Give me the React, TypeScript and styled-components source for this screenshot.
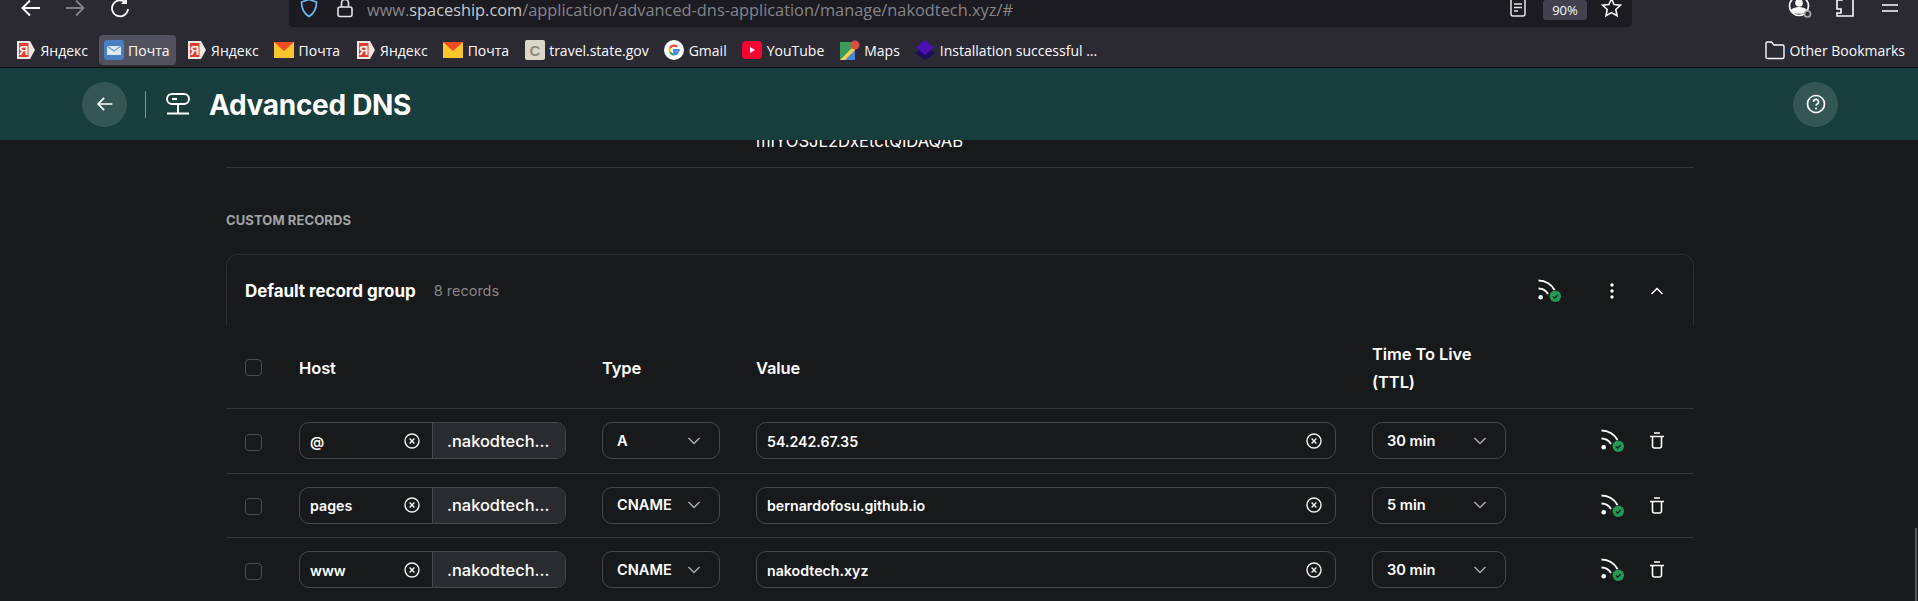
import { ReactNode } from "react";
import styled, { createGlobalStyle } from "styled-components";

const GlobalStyle = createGlobalStyle`
  html, body {
    margin: 0;
    padding: 0;
    background: #18191b;
  }
  * {
    box-sizing: border-box;
  }
`;

const Page = styled.div`
  width: 1918px;
  height: 601px;
  overflow: hidden;
  display: flex;
  flex-direction: column;
  position: relative;
  background: #18191b;
`;

/* browser chrome */

const Toolbar = styled.div`
  height: 27px;
  flex: none;
  background: #2b2a33;
  overflow: hidden;
  color: #fbfbfe;
`;

const ToolbarInner = styled.div`
  height: 39px;
  margin-top: -12px;
  display: flex;
  align-items: center;
  padding-left: 20px;
`;

const NavButton = styled.div<{ $gap: number; $dim?: boolean }>`
  display: flex;
  width: 22px;
  justify-content: center;
  margin-right: ${(p) => p.$gap}px;
  opacity: ${(p) => (p.$dim ? 0.4 : 1)};
`;

const UrlBar = styled.div`
  width: 1343px;
  height: 39px;
  margin-left: 158px;
  padding-left: 11px;
  padding-right: 10px;
  background: #1c1b22;
  border-radius: 4px;
  display: flex;
  align-items: center;
`;

const SecurityIcons = styled.div`
  display: flex;
  align-items: center;
  gap: 19px;
`;

const UrlText = styled.div`
  margin-left: 14px;
  padding-top: 4px;
  font: 400 16.35px "Open Sans", sans-serif;
  color: #85848a;
  white-space: nowrap;
  flex: 1;
  & b {
    font-weight: 400;
    color: #c9c9cc;
  }
`;

const ZoomChip = styled.div`
  width: 44px;
  height: 20px;
  margin: 5px 14px 0 17px;
  border-radius: 3px;
  background: #42414d;
  font: 400 13px "Open Sans", sans-serif;
  line-height: 20px;
  text-align: center;
  color: #fbfbfe;
`;

const RightTools = styled.div`
  margin-left: 145px;
  display: flex;
`;

const ToolSlot = styled.div`
  width: 45px;
  display: flex;
  justify-content: center;
`;

const Bookmarks = styled.div`
  height: 41px;
  flex: none;
  background: #2b2a33;
  border-bottom: 1px solid #0c0c0d;
  display: flex;
  align-items: center;
  padding: 6px 13px 0 16px;
  color: #fbfbfe;
  font: 400 14px "Open Sans", sans-serif;
`;

const Bookmark = styled.div<{ $active?: boolean }>`
  display: flex;
  align-items: center;
  gap: 4.5px;
  height: 30px;
  padding: ${(p) => (p.$active ? "0 6px 0 5px" : "0")};
  margin-right: ${(p) => (p.$active ? "11px" : "15.5px")};
  margin-left: ${(p) => (p.$active ? "-5px" : "0")};
  border-radius: 4px;
  background: ${(p) => (p.$active ? "#52525e" : "transparent")};
  white-space: nowrap;
`;

const OtherBookmarks = styled(Bookmark)`
  margin: 0 0 0 auto;
`;

const Favicon = styled.svg`
  width: 20px;
  height: 20px;
  flex: none;
`;

/* app header */

const AppHeader = styled.header`
  height: 72px;
  flex: none;
  background: #173d3c;
  display: flex;
  align-items: center;
  padding: 0 80px 0 82px;
  color: #fff;
`;

const RoundButton = styled.div`
  width: 45px;
  height: 45px;
  border-radius: 50%;
  background: #345755;
  display: flex;
  align-items: center;
  justify-content: center;
`;

const HeaderDivider = styled.div`
  width: 1px;
  height: 27px;
  margin: 0 20px 0 18px;
  background: #7d9493;
`;

const Title = styled.h1`
  margin: 0 0 0 19px;
  padding-top: 2px;
  flex: 1;
  font: 700 28px "Inter", sans-serif;
  letter-spacing: -0.3px;
`;

/* dns content */

const Main = styled.main`
  flex: 1;
  overflow: hidden;
  padding: 0 224px 0 226px;
`;

const ScrolledContent = styled.div`
  margin-top: -12px;
`;

const DkimRow = styled.div`
  height: 40px;
  padding: 0 0 0 530px;
  border-bottom: 1px solid #333538;
  color: #fff;
  font: 400 16.6px "Inter", sans-serif;
  line-height: 27px;
`;

const SectionLabel = styled.div`
  margin-top: 44px;
  height: 16px;
  color: #a2a3a5;
  font: 700 13px "Inter", sans-serif;
  line-height: 16px;
  letter-spacing: 0.1px;
`;

const GroupHeader = styled.div`
  margin-top: 26px;
  height: 72px;
  border: 1px solid #2b2d30;
  border-bottom: 0;
  border-radius: 12px 12px 0 0;
  display: flex;
  align-items: center;
  padding-left: 18px;
`;

const GroupName = styled.div`
  color: #fff;
  font: 700 17px "Inter", sans-serif;
  letter-spacing: -0.05px;
`;

const GroupCount = styled.div`
  margin-left: 18px;
  flex: 1;
  color: #85868a;
  font: 400 14.5px "Inter", sans-serif;
`;

const GroupActions = styled.div`
  display: flex;
  align-items: center;
  padding-right: 29px;
  color: #fff;
`;

const DotsSlot = styled.div`
  display: flex;
  margin: 0 36px 0 48px;
`;

const recordColumns = "54px 303px 154px 616px 1fr";

const HeadRow = styled.div`
  height: 83px;
  display: grid;
  grid-template-columns: ${recordColumns};
  align-items: center;
  padding-left: 19px;
  border-bottom: 1px solid #333538;
  color: #fff;
  font: 600 16.5px "Inter", sans-serif;
  letter-spacing: -0.1px;
  line-height: 28px;
`;

const HeadCell = styled.div`
  padding-top: 2px;
`;

const RecordRow = styled.div`
  height: 64.5px;
  display: grid;
  grid-template-columns: ${recordColumns};
  align-items: center;
  padding-left: 19px;
  border-bottom: 1px solid #333538;
`;

const Checkbox = styled.div`
  width: 17px;
  height: 17px;
  border: 1px solid #4b4d50;
  border-radius: 4px;
`;

const RowCheckbox = styled(Checkbox)`
  margin-top: 3px;
`;

const FieldBox = styled.div<{ $width: number }>`
  width: ${(p) => p.$width}px;
  height: 37px;
  flex: none;
  border: 1px solid #46484b;
  border-radius: 10px;
  display: flex;
  align-items: center;
  color: #fff;
  font: 600 14.2px "Inter", sans-serif;
  overflow: hidden;
  white-space: nowrap;
`;

const FieldValue = styled.div`
  flex: 1;
  padding: 1px 0 0 10px;
`;

const ClearSlot = styled.div<{ $right: number }>`
  display: flex;
  margin-right: ${(p) => p.$right}px;
`;

const DomainSuffix = styled.div`
  width: 133px;
  height: 100%;
  padding-left: 14px;
  display: flex;
  align-items: center;
  background: #2a2b2e;
  border-left: 1px solid #46484b;
  font-size: 16.4px;
  font-weight: 500;
`;

const SelectValue = styled.div`
  flex: 1;
  padding-left: 14px;
  font-size: 14.6px;
`;

const SelectChevron = styled.div`
  display: flex;
  margin-right: 18px;
  color: #a9aaac;
`;

const RowActions = styled.div`
  display: flex;
  align-items: center;
`;

const SyncSlot = styled.div`
  display: flex;
  margin: 0 25px 0 95px;
`;

const ScrollThumb = styled.div`
  position: absolute;
  right: 1px;
  top: 528px;
  width: 2px;
  height: 73px;
  background: #55565a;
`;

/* drawn icons */

const Arrow = ({ size = 22, right }: { size?: number; right?: boolean }) => (
  <svg width={size} height={size} viewBox="0 0 22 22" fill="none" stroke="currentColor" strokeWidth="2">
    <path d={right ? "M2 11h17M12 3.500 19.500 11 12 18.500" : "M20 11H3M10 3.500 2.500 11l7.500 7.500"} />
  </svg>
);

const Reload = () => (
  <svg width="20" height="20" viewBox="0 0 20 20" fill="none" stroke="currentColor" strokeWidth="1.800">
    <path d="M15.500 4.500A8 8 0 1 0 18 11" />
    <path d="M17 0v6h-6z" fill="currentColor" stroke="none" />
  </svg>
);

const Shield = () => (
  <svg width="18" height="20" viewBox="0 0 18 20" fill="none" stroke="#6db9ee" strokeWidth="1.700">
    <path d="M9 1.500 16.500 4c0 6.500-1.500 11-7.500 14.500C3 15 1.500 10.500 1.500 4z" />
  </svg>
);

const Lock = () => (
  <svg width="16" height="20" viewBox="0 0 16 20" fill="none" stroke="#e3e3e5" strokeWidth="1.600">
    <path d="M4.500 9V5a3.500 3.500 0 0 1 7 0v4" />
    <rect x="1" y="9" width="14" height="9.500" rx="2" />
  </svg>
);

const ReaderIcon = () => (
  <svg width="16" height="20" viewBox="0 0 16 20" fill="none" stroke="#e3e3e5" strokeWidth="1.500">
    <rect x="1" y="1" width="14" height="17" rx="2" />
    <path d="M4 6h8M4 9.500h8M4 13h4" />
  </svg>
);

const Star = () => (
  <svg width="21" height="21" viewBox="0 0 24 24" fill="none" stroke="#fbfbfe" strokeWidth="1.800">
    <path d="m12 2 3 6.600 7.200.8-5.300 4.900 1.400 7.100L12 17.800l-6.300 3.600 1.400-7.100L1.800 9.400 9 8.600z" />
  </svg>
);

const Account = () => (
  <svg width="24" height="24" viewBox="0 0 24 24" fill="none" stroke="#fbfbfe" strokeWidth="1.700">
    <circle cx="11" cy="10" r="9.500" />
    <circle cx="11" cy="7" r="3" fill="#fbfbfe" />
    <path d="M4 14c3-3 11-3 14 0-2 4-12 4-14 0z" fill="#fbfbfe" />
    <circle cx="19.500" cy="18" r="3" stroke="#a8a8ac" fill="#2b2a33" />
  </svg>
);

const Puzzle = () => (
  <svg width="20" height="22" viewBox="0 0 20 22" fill="none" stroke="#fbfbfe" strokeWidth="1.600">
    <path d="M7 4V1h11v19H2v-3h4v-4H2V4z" />
  </svg>
);

const Burger = () => (
  <svg width="18" height="18" viewBox="0 0 18 18" stroke="#fbfbfe" strokeWidth="1.500">
    <path d="M1 3h16M1 9h16M1 15h16" />
  </svg>
);

const YandexIcon = () => (
  <Favicon viewBox="0 0 20 20">
    <path d="M1 1h13l5 9-5 9H1z" fill="#ece8e3" />
    <path d="M3 3h9.500v14H3z" fill="#e03c31" />
    <text x="7.700" y="15" textAnchor="middle" fontSize="13" fontWeight="700" fontFamily="Liberation Sans, sans-serif" fill="#f7f2ee">
      Я
    </text>
  </Favicon>
);

const MailIcon = () => (
  <Favicon viewBox="0 0 20 20">
    <path d="M0 2h20v16H0z" fill="#fbc52d" />
    <path d="M0 2h20l-10 9z" fill="#ef4b23" />
  </Favicon>
);

const ActiveMailIcon = () => (
  <Favicon viewBox="0 0 20 20">
    <rect width="20" height="20" rx="3" fill="#4a7fc4" />
    <path d="M3 6h14v9H3z" fill="#dce8f7" />
    <path d="m3 6 7 5 7-5" fill="none" stroke="#6e9ad4" strokeWidth="1.200" />
  </Favicon>
);

const TravelIcon = () => (
  <Favicon viewBox="0 0 20 20">
    <rect width="20" height="20" rx="2" fill="#dcd8c8" />
    <text x="10" y="15.500" textAnchor="middle" fontSize="15" fontWeight="700" fontFamily="Liberation Sans, sans-serif" fill="#8f8c7c">
      C
    </text>
  </Favicon>
);

const GoogleIcon = () => (
  <Favicon viewBox="0 0 20 20">
    <circle cx="10" cy="10" r="10" fill="#fff" />
    <path d="M15.800 10.200H10.200v2.300h3.200a3.500 3.500 0 0 1-3.300 2" fill="none" stroke="#4285f4" strokeWidth="2.200" />
    <path d="M10.100 14.500a4.500 4.500 0 0 1-4-2.500" fill="none" stroke="#34a853" strokeWidth="2.200" />
    <path d="M6.100 12a4.500 4.500 0 0 1 0-4" fill="none" stroke="#fbbc05" strokeWidth="2.200" />
    <path d="M6.100 8a4.500 4.500 0 0 1 7-1.300" fill="none" stroke="#ea4335" strokeWidth="2.200" />
  </Favicon>
);

const YouTubeIcon = () => (
  <Favicon viewBox="0 0 20 20">
    <rect y="1" width="20" height="18" rx="4" fill="#fe0033" />
    <path d="m8 7 5 3-5 3z" fill="#fff" />
  </Favicon>
);

const MapsIcon = () => (
  <Favicon viewBox="0 0 20 20">
    <path d="M0 2h15v18H0z" fill="#3b9b5b" />
    <path d="M0 20 15 5v15z" fill="#f4d24a" />
    <path d="M5 20 15 10v10z" fill="#4a86d8" />
    <circle cx="15" cy="5" r="4.500" fill="#d9503c" />
  </Favicon>
);

const LayersIcon = () => (
  <Favicon viewBox="0 0 20 20">
    <path d="m10 6 10 7-10 7-10-7z" fill="#1f0d63" />
    <path d="m10 0 9 7.500-9 7.500-9-7.500z" fill="#4b10b4" />
  </Favicon>
);

const FolderIcon = () => (
  <Favicon viewBox="0 0 20 20" fill="none" stroke="#fbfbfe" strokeWidth="1.400">
    <path d="M1 17V3.500A1.500 1.500 0 0 1 2.500 2h4l2.500 3h8.500A1.500 1.500 0 0 1 19 6.500V17a1.500 1.500 0 0 1-1.500 1.500h-15A1.500 1.500 0 0 1 1 17z" />
  </Favicon>
);

const DnsIcon = () => (
  <svg width="24" height="24" viewBox="0 0 24 24" fill="none" stroke="#fff" strokeWidth="2">
    <rect x="1" y="2" width="22" height="10" rx="5" />
    <path d="M6 7h5" strokeWidth="2.200" />
    <path d="M12 12v9M1 21.500h22" />
  </svg>
);

const HelpIcon = () => (
  <svg width="20" height="20" viewBox="0 0 20 20" fill="none" stroke="#fff" strokeWidth="1.700">
    <circle cx="10" cy="10" r="8.500" />
    <path d="M7.500 7.800a2.500 2.500 0 1 1 3.700 2.200c-.8.500-1.200 1-1.200 1.800" />
    <circle cx="10" cy="14.500" r="1" fill="#fff" stroke="none" />
  </svg>
);

const ClearIcon = () => (
  <svg width="16" height="16" viewBox="0 0 16 16" fill="none" stroke="#f3f3f3" strokeWidth="1.400">
    <circle cx="8" cy="8" r="7" />
    <path d="m5.600 5.600 4.800 4.800m0-4.800-4.800 4.800" />
  </svg>
);

const Chevron = ({ up }: { up?: boolean }) => (
  <svg width="14" height="10" viewBox="0 0 14 10" fill="none" stroke="currentColor" strokeWidth="1.500">
    <path d={up ? "m1.500 8 5.500-5.500L12.500 8" : "m1.500 2 5.500 5.500L12.500 2"} />
  </svg>
);

const SyncedIcon = () => (
  <svg width="24" height="23" viewBox="0 0 24 23" fill="none">
    <circle cx="2.700" cy="18.300" r="2.300" fill="#fff" />
    <path d="M.5 9.500c4 0 7.500 2 9.500 5.500" stroke="#fff" strokeWidth="2" />
    <path d="M.5 1.500C7 1.500 13.500 5 16.500 11" stroke="#fff" strokeWidth="2" />
    <circle cx="17.300" cy="17.300" r="5.700" fill="#229a56" />
    <path d="m15 17.500 1.700 1.700 3-3.200" stroke="#13261c" strokeWidth="1.400" />
  </svg>
);

const Trash = () => (
  <svg width="14" height="17" viewBox="0 0 14 17" fill="none" stroke="#fff" strokeWidth="1.600">
    <path d="M4 1h6M0 4.500h14M2.500 4.500v9.500a2 2 0 0 0 2 2h5a2 2 0 0 0 2-2V4.500" />
  </svg>
);

const Dots = () => (
  <svg width="4" height="16" viewBox="0 0 4 16" fill="#fff">
    <circle cx="2" cy="2" r="1.700" />
    <circle cx="2" cy="8" r="1.700" />
    <circle cx="2" cy="14" r="1.700" />
  </svg>
);

/* data */

const bookmarkItems: { icon: ReactNode; label: string; active?: boolean }[] = [
  { icon: <YandexIcon />, label: "Яндекс" },
  { icon: <ActiveMailIcon />, label: "Почта", active: true },
  { icon: <YandexIcon />, label: "Яндекс" },
  { icon: <MailIcon />, label: "Почта" },
  { icon: <YandexIcon />, label: "Яндекс" },
  { icon: <MailIcon />, label: "Почта" },
  { icon: <TravelIcon />, label: "travel.state.gov" },
  { icon: <GoogleIcon />, label: "Gmail" },
  { icon: <YouTubeIcon />, label: "YouTube" },
  { icon: <MapsIcon />, label: "Maps" },
  { icon: <LayersIcon />, label: "Installation successful ..." },
];

const records = [
  { host: "@", type: "A", value: "54.242.67.35", ttl: "30 min" },
  { host: "pages", type: "CNAME", value: "bernardofosu.github.io", ttl: "5 min" },
  { host: "www", type: "CNAME", value: "nakodtech.xyz", ttl: "30 min" },
];

const Select = ({ width, label }: { width: number; label: string }) => (
  <FieldBox $width={width}>
    <SelectValue>{label}</SelectValue>
    <SelectChevron>
      <Chevron />
    </SelectChevron>
  </FieldBox>
);

export default function App() {
  return (
    <Page>
      <GlobalStyle />
      <Toolbar>
        <ToolbarInner>
          <NavButton $gap={22}>
            <Arrow />
          </NavButton>
          <NavButton $gap={23} $dim>
            <Arrow right />
          </NavButton>
          <NavButton $gap={0}>
            <Reload />
          </NavButton>
          <UrlBar>
            <SecurityIcons>
              <Shield />
              <Lock />
            </SecurityIcons>
            <UrlText>
              www.<b>spaceship.com</b>/application/advanced-dns-application/manage/nakodtech.xyz/#
            </UrlText>
            <ReaderIcon />
            <ZoomChip>90%</ZoomChip>
            <Star />
          </UrlBar>
          <RightTools>
            <ToolSlot>
              <Account />
            </ToolSlot>
            <ToolSlot>
              <Puzzle />
            </ToolSlot>
            <ToolSlot>
              <Burger />
            </ToolSlot>
          </RightTools>
        </ToolbarInner>
      </Toolbar>
      <Bookmarks>
        {bookmarkItems.map((item, i) => (
          <Bookmark key={i} $active={item.active}>
            {item.icon}
            {item.label}
          </Bookmark>
        ))}
        <OtherBookmarks>
          <FolderIcon />
          Other Bookmarks
        </OtherBookmarks>
      </Bookmarks>
      <AppHeader>
        <RoundButton>
          <Arrow size={18} />
        </RoundButton>
        <HeaderDivider />
        <DnsIcon />
        <Title>Advanced DNS</Title>
        <RoundButton>
          <HelpIcon />
        </RoundButton>
      </AppHeader>
      <Main>
        <ScrolledContent>
          <DkimRow>mIYOSJL2DxEtctQIDAQAB</DkimRow>
          <SectionLabel>CUSTOM RECORDS</SectionLabel>
          <GroupHeader>
            <GroupName>Default record group</GroupName>
            <GroupCount>8 records</GroupCount>
            <GroupActions>
              <SyncedIcon />
              <DotsSlot>
                <Dots />
              </DotsSlot>
              <Chevron up />
            </GroupActions>
          </GroupHeader>
          <HeadRow>
            <Checkbox />
            <HeadCell>Host</HeadCell>
            <HeadCell>Type</HeadCell>
            <HeadCell>Value</HeadCell>
            <HeadCell>
              Time To Live
              <br />
              (TTL)
            </HeadCell>
          </HeadRow>
          {records.map((r) => (
            <RecordRow key={r.host}>
              <RowCheckbox />
              <FieldBox $width={267}>
                <FieldValue>{r.host}</FieldValue>
                <ClearSlot $right={12}>
                  <ClearIcon />
                </ClearSlot>
                <DomainSuffix>.nakodtech...</DomainSuffix>
              </FieldBox>
              <Select width={118} label={r.type} />
              <FieldBox $width={580}>
                <FieldValue>{r.value}</FieldValue>
                <ClearSlot $right={13}>
                  <ClearIcon />
                </ClearSlot>
              </FieldBox>
              <RowActions>
                <Select width={134} label={r.ttl} />
                <SyncSlot>
                  <SyncedIcon />
                </SyncSlot>
                <Trash />
              </RowActions>
            </RecordRow>
          ))}
        </ScrolledContent>
      </Main>
      <ScrollThumb />
    </Page>
  );
}
